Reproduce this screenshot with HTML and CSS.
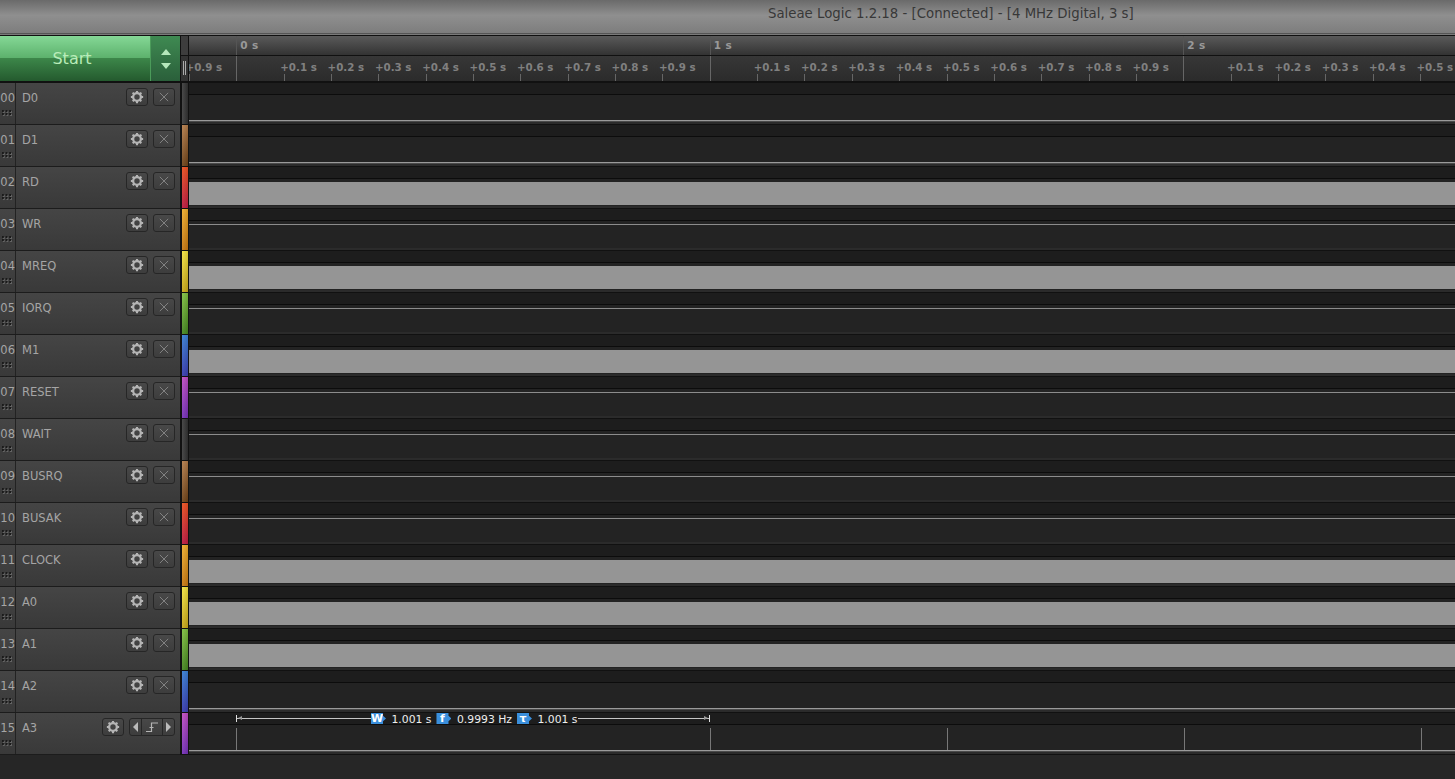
FILE: index.html
```html
<!DOCTYPE html>
<html lang="en">
<head>
  <meta charset="UTF-8">
  <title>Saleae Logic 1.2.18</title>
  <link rel="stylesheet" href="styles.css">
</head>
<body>
  <svg class="defs" width="0" height="0">
    <symbol id="gear" viewBox="0 0 16 16">
      <circle cx="8" cy="8" r="4.4" fill="none" stroke="currentColor" stroke-width="2.6"/>
      <path d="M8 1v14M1 8h14M3 3l10 10M13 3L3 13" stroke="currentColor" stroke-width="2.4" stroke-dasharray="2.6 8.8 2.6" fill="none"/>
    </symbol>
    <symbol id="cross" viewBox="0 0 12 12">
      <path d="M1 1l10 10M11 1L1 11" stroke="currentColor" stroke-width="1" fill="none"/>
    </symbol>
  </svg>

  <header class="titlebar">Saleae Logic 1.2.18 - [Connected] - [4 MHz Digital, 3 s]</header>

  <div class="toolbar">
    <div class="start-group">
      <div class="start-btn">Start</div>
      <div class="start-arrows"><span class="arrow-up"></span><span class="arrow-down"></span></div>
    </div>
    <div class="ruler-gutter"><span class="grip-bars"></span></div>
    <div class="ruler">
      <div class="ruler-major">
        <div class="major-cell first"></div>
        <div class="major-cell">0 s</div>
        <div class="major-cell">1 s</div>
        <div class="major-cell">2 s</div>
      </div>
      <div class="ruler-minor">
        <div class="tick"><span>+0.9 s</span></div>
        <div class="tick major"></div>
        <div class="tick"><span>+0.1 s</span></div>
        <div class="tick"><span>+0.2 s</span></div>
        <div class="tick"><span>+0.3 s</span></div>
        <div class="tick"><span>+0.4 s</span></div>
        <div class="tick"><span>+0.5 s</span></div>
        <div class="tick"><span>+0.6 s</span></div>
        <div class="tick"><span>+0.7 s</span></div>
        <div class="tick"><span>+0.8 s</span></div>
        <div class="tick"><span>+0.9 s</span></div>
        <div class="tick major"></div>
        <div class="tick"><span>+0.1 s</span></div>
        <div class="tick"><span>+0.2 s</span></div>
        <div class="tick"><span>+0.3 s</span></div>
        <div class="tick"><span>+0.4 s</span></div>
        <div class="tick"><span>+0.5 s</span></div>
        <div class="tick"><span>+0.6 s</span></div>
        <div class="tick"><span>+0.7 s</span></div>
        <div class="tick"><span>+0.8 s</span></div>
        <div class="tick"><span>+0.9 s</span></div>
        <div class="tick major"></div>
        <div class="tick"><span>+0.1 s</span></div>
        <div class="tick"><span>+0.2 s</span></div>
        <div class="tick"><span>+0.3 s</span></div>
        <div class="tick"><span>+0.4 s</span></div>
        <div class="tick"><span>+0.5 s</span></div>
      </div>
    </div>
  </div>

  <main class="channels">
    <div class="row">
      <div class="row-head"><div class="num">00<i class="dots"></i></div><div class="name">D0</div><div class="btns"><span class="btn"><svg class="ico-gear"><use href="#gear"/></svg></span><span class="btn"><svg class="ico-x"><use href="#cross"/></svg></span></div></div>
      <div class="strip c-black"></div>
      <div class="track"><div class="track-top"></div><div class="track-main"><div class="sig low"></div></div></div>
    </div>
    <div class="row">
      <div class="row-head"><div class="num">01<i class="dots"></i></div><div class="name">D1</div><div class="btns"><span class="btn"><svg class="ico-gear"><use href="#gear"/></svg></span><span class="btn"><svg class="ico-x"><use href="#cross"/></svg></span></div></div>
      <div class="strip c-brown"></div>
      <div class="track"><div class="track-top"></div><div class="track-main"><div class="sig low"></div></div></div>
    </div>
    <div class="row">
      <div class="row-head"><div class="num">02<i class="dots"></i></div><div class="name">RD</div><div class="btns"><span class="btn"><svg class="ico-gear"><use href="#gear"/></svg></span><span class="btn"><svg class="ico-x"><use href="#cross"/></svg></span></div></div>
      <div class="strip c-red"></div>
      <div class="track"><div class="track-top"></div><div class="track-main"><div class="sig band"></div></div></div>
    </div>
    <div class="row">
      <div class="row-head"><div class="num">03<i class="dots"></i></div><div class="name">WR</div><div class="btns"><span class="btn"><svg class="ico-gear"><use href="#gear"/></svg></span><span class="btn"><svg class="ico-x"><use href="#cross"/></svg></span></div></div>
      <div class="strip c-orange"></div>
      <div class="track"><div class="track-top"></div><div class="track-main"><div class="sig high"></div></div></div>
    </div>
    <div class="row">
      <div class="row-head"><div class="num">04<i class="dots"></i></div><div class="name">MREQ</div><div class="btns"><span class="btn"><svg class="ico-gear"><use href="#gear"/></svg></span><span class="btn"><svg class="ico-x"><use href="#cross"/></svg></span></div></div>
      <div class="strip c-yellow"></div>
      <div class="track"><div class="track-top"></div><div class="track-main"><div class="sig band"></div></div></div>
    </div>
    <div class="row">
      <div class="row-head"><div class="num">05<i class="dots"></i></div><div class="name">IORQ</div><div class="btns"><span class="btn"><svg class="ico-gear"><use href="#gear"/></svg></span><span class="btn"><svg class="ico-x"><use href="#cross"/></svg></span></div></div>
      <div class="strip c-green"></div>
      <div class="track"><div class="track-top"></div><div class="track-main"><div class="sig high"></div></div></div>
    </div>
    <div class="row">
      <div class="row-head"><div class="num">06<i class="dots"></i></div><div class="name">M1</div><div class="btns"><span class="btn"><svg class="ico-gear"><use href="#gear"/></svg></span><span class="btn"><svg class="ico-x"><use href="#cross"/></svg></span></div></div>
      <div class="strip c-blue"></div>
      <div class="track"><div class="track-top"></div><div class="track-main"><div class="sig band"></div></div></div>
    </div>
    <div class="row">
      <div class="row-head"><div class="num">07<i class="dots"></i></div><div class="name">RESET</div><div class="btns"><span class="btn"><svg class="ico-gear"><use href="#gear"/></svg></span><span class="btn"><svg class="ico-x"><use href="#cross"/></svg></span></div></div>
      <div class="strip c-purple"></div>
      <div class="track"><div class="track-top"></div><div class="track-main"><div class="sig high"></div></div></div>
    </div>
    <div class="row">
      <div class="row-head"><div class="num">08<i class="dots"></i></div><div class="name">WAIT</div><div class="btns"><span class="btn"><svg class="ico-gear"><use href="#gear"/></svg></span><span class="btn"><svg class="ico-x"><use href="#cross"/></svg></span></div></div>
      <div class="strip c-black"></div>
      <div class="track"><div class="track-top"></div><div class="track-main"><div class="sig high"></div></div></div>
    </div>
    <div class="row">
      <div class="row-head"><div class="num">09<i class="dots"></i></div><div class="name">BUSRQ</div><div class="btns"><span class="btn"><svg class="ico-gear"><use href="#gear"/></svg></span><span class="btn"><svg class="ico-x"><use href="#cross"/></svg></span></div></div>
      <div class="strip c-brown"></div>
      <div class="track"><div class="track-top"></div><div class="track-main"><div class="sig high"></div></div></div>
    </div>
    <div class="row">
      <div class="row-head"><div class="num">10<i class="dots"></i></div><div class="name">BUSAK</div><div class="btns"><span class="btn"><svg class="ico-gear"><use href="#gear"/></svg></span><span class="btn"><svg class="ico-x"><use href="#cross"/></svg></span></div></div>
      <div class="strip c-red"></div>
      <div class="track"><div class="track-top"></div><div class="track-main"><div class="sig high"></div></div></div>
    </div>
    <div class="row">
      <div class="row-head"><div class="num">11<i class="dots"></i></div><div class="name">CLOCK</div><div class="btns"><span class="btn"><svg class="ico-gear"><use href="#gear"/></svg></span><span class="btn"><svg class="ico-x"><use href="#cross"/></svg></span></div></div>
      <div class="strip c-orange"></div>
      <div class="track"><div class="track-top"></div><div class="track-main"><div class="sig band"></div></div></div>
    </div>
    <div class="row">
      <div class="row-head"><div class="num">12<i class="dots"></i></div><div class="name">A0</div><div class="btns"><span class="btn"><svg class="ico-gear"><use href="#gear"/></svg></span><span class="btn"><svg class="ico-x"><use href="#cross"/></svg></span></div></div>
      <div class="strip c-yellow"></div>
      <div class="track"><div class="track-top"></div><div class="track-main"><div class="sig band"></div></div></div>
    </div>
    <div class="row">
      <div class="row-head"><div class="num">13<i class="dots"></i></div><div class="name">A1</div><div class="btns"><span class="btn"><svg class="ico-gear"><use href="#gear"/></svg></span><span class="btn"><svg class="ico-x"><use href="#cross"/></svg></span></div></div>
      <div class="strip c-green"></div>
      <div class="track"><div class="track-top"></div><div class="track-main"><div class="sig band"></div></div></div>
    </div>
    <div class="row">
      <div class="row-head"><div class="num">14<i class="dots"></i></div><div class="name">A2</div><div class="btns"><span class="btn"><svg class="ico-gear"><use href="#gear"/></svg></span><span class="btn"><svg class="ico-x"><use href="#cross"/></svg></span></div></div>
      <div class="strip c-blue"></div>
      <div class="track"><div class="track-top"></div><div class="track-main"><div class="sig low"></div></div></div>
    </div>
    <div class="row">
      <div class="row-head"><div class="num">15<i class="dots"></i></div><div class="name">A3</div>
        <div class="btns">
          <span class="btn"><svg class="ico-gear"><use href="#gear"/></svg></span>
          <span class="btn-group">
            <span class="seg seg-side"><i class="tri-left"></i></span>
            <span class="seg seg-mid"><svg class="ico-edge" viewBox="0 0 12 12"><path d="M0 10.5h5.5V2H12M3.500 6.500h4" stroke="currentColor" stroke-width="1.200" fill="none"/></svg></span>
            <span class="seg seg-side"><i class="tri-right"></i></span>
          </span>
        </div>
      </div>
      <div class="strip c-purple"></div>
      <div class="track">
        <div class="track-top">
          <div class="measure">
            <span class="m-line m-start"></span>
            <b class="badge">W</b><span class="m-val">1.001 s</span>
            <b class="badge">f</b><span class="m-val">0.9993 Hz</span>
            <b class="badge">τ</b><span class="m-val">1.001 s</span>
            <span class="m-line m-end"></span>
          </div>
        </div>
        <div class="track-main markers"><div class="sig low"></div></div>
      </div>
    </div>
  </main>
</body>
</html>
```

FILE: styles.css
```css
html, body {
  margin: 0;
  padding: 0;
  height: 100%;
  overflow: hidden;
  background-color: #262626;
  font-family: "DejaVu Sans", sans-serif;
}

.defs {
  display: block;
  height: 0;
}

.titlebar {
  height: 35px;
  box-sizing: border-box;
  padding: 6px 0 0 768px;
  font-size: 13.3px;
  line-height: 16px;
  color: #383838;
  white-space: nowrap;
  background: linear-gradient(#6a6a6a, #8f8f8f 45%, #7c7c7c);
  border-bottom: 1px solid #7a7a7a;
  box-shadow: inset 0 -1px #555;
}

/* toolbar: start button + time ruler */
.toolbar {
  display: flex;
  height: 48px;
  box-sizing: border-box;
  border-top: 1px solid #111;
  border-bottom: 2px solid #111;
  background: #111;
}

.start-group {
  display: flex;
  width: 180px;
  flex: none;
}

.start-btn {
  width: 150px;
  box-sizing: border-box;
  padding-right: 6px;
  text-align: center;
  font-size: 16px;
  line-height: 45px;
  color: #b9ecb9;
  background: linear-gradient(#85d896, #5db26d 48%, #3c8649 50%, #245a2e);
}

.start-arrows {
  width: 29px;
  border-left: 1px solid #4b9b5a;
  display: flex;
  flex-direction: column;
  align-items: center;
  justify-content: center;
  gap: 8px;
  background: linear-gradient(#3f8a52, #2a5f3a);
}

.arrow-up, .arrow-down {
  width: 0;
  height: 0;
  border-left: 5px solid transparent;
  border-right: 5px solid transparent;
}

.arrow-up { border-bottom: 6px solid #b5e8bb; }
.arrow-down { border-top: 6px solid #b5e8bb; }

.ruler-gutter {
  width: 7px;
  margin: 0 1px;
  flex: none;
  background: linear-gradient(#3d3d3d 0, #3d3d3d 19px, #111 19px, #111 20px, #333 20px);
  position: relative;
}

.grip-bars {
  position: absolute;
  left: 2px;
  top: 25px;
  width: 1px;
  height: 14px;
  border-left: 1px solid #aaa;
  border-right: 1px solid #aaa;
}

.ruler {
  flex: 1;
  min-width: 0;
  overflow: hidden;
}

.ruler-major {
  display: flex;
  height: 19px;
  background: linear-gradient(#5a5a5a, #333);
  border-bottom: 1px solid #111;
}

.major-cell {
  width: 473.5px;
  flex: none;
  box-sizing: border-box;
  padding: 3px 0 0 3px;
  font-size: 10.5px;
  font-weight: bold;
  letter-spacing: 0.4px;
  line-height: 13px;
  color: #999;
  border-left: 1px solid #555;
}

.major-cell.first {
  width: 47.3px;
  border-left: 0;
}

.ruler-minor {
  display: flex;
  height: 25px;
  background: linear-gradient(#373737, #2b2b2b);
}

.tick {
  width: 47.35px;
  height: 25px;
  flex: none;
  position: relative;
}

.tick::before {
  content: "";
  position: absolute;
  left: 0;
  bottom: 0;
  width: 1px;
  height: 7px;
  background: #666;
}

.tick.major::before {
  height: 25px;
}

.tick span {
  display: block;
  margin-left: -3.5px;
  padding-top: 5px;
  font-size: 10.3px;
  font-weight: bold;
  line-height: 13px;
  color: #808080;
  white-space: nowrap;
}

/* channel rows */
.channels {
  display: flex;
  flex-direction: column;
}

.row {
  display: flex;
  height: 42px;
  background: #111;
}

.row-head {
  width: 180px;
  flex: none;
  height: 41px;
  display: flex;
  background: linear-gradient(#454545, #393939);
  border-bottom: 1px solid #1c1c1c;
}

.num {
  width: 15px;
  flex: none;
  height: 41px;
  overflow: hidden;
  position: relative;
  text-align: right;
  direction: rtl;
  font-size: 11.5px;
  line-height: 30px;
  color: #a5a5a5;
  border-right: 1px solid #222;
}

.dots {
  position: absolute;
  left: 2px;
  top: 27px;
  width: 11px;
  height: 6px;
  background-image:
    radial-gradient(circle at 1px 1px, #1a1a1a 1px, transparent 1.2px),
    radial-gradient(circle at 2px 2px, #666 0.9px, transparent 1.1px);
  background-size: 3.6px 3px;
}

.name {
  flex: 1;
  padding-left: 6px;
  font-size: 11.5px;
  line-height: 30px;
  color: #a5a5a5;
}

.btns {
  display: flex;
  gap: 5px;
  padding: 5px 5px 0 0;
}

.btn, .btn-group {
  height: 16px;
  border: 1px solid #262626;
  border-radius: 3px;
  background: linear-gradient(#484848, #3d3d3d);
  display: flex;
  align-items: center;
  justify-content: center;
  color: #b5b5b5;
}

.btn {
  width: 20px;
}

.ico-gear {
  width: 14px;
  height: 14px;
}

.ico-x {
  width: 10px;
  height: 10px;
  color: #8f8f8f;
}

.btn-group {
  width: 44px;
  justify-content: flex-start;
}

.seg {
  height: 16px;
  display: flex;
  align-items: center;
  justify-content: center;
}

.seg-side { width: 11px; }

.seg-mid {
  width: 20px;
  border-left: 1px solid #262626;
  border-right: 1px solid #262626;
}

.ico-edge {
  width: 12px;
  height: 12px;
}

.tri-left, .tri-right {
  width: 0;
  height: 0;
  border-top: 5px solid transparent;
  border-bottom: 5px solid transparent;
}

.tri-left { border-right: 5px solid #bbb; }
.tri-right { border-left: 5px solid #bbb; }

.strip {
  width: 6px;
  height: 41px;
  margin-left: 2px;
  flex: none;
}

.c-black { background: linear-gradient(90deg, #4a4a4a, #2c2c2c); }
.c-brown { background: linear-gradient(90deg, rgba(255,255,255,.08), rgba(0,0,0,.12)), linear-gradient(#b57d4a, #6e4218); }
.c-red { background: linear-gradient(90deg, rgba(255,255,255,.06), rgba(0,0,0,.1)), linear-gradient(#ec5222, #bd1c42); }
.c-orange { background: linear-gradient(90deg, rgba(255,255,255,.08), rgba(0,0,0,.12)), linear-gradient(#f0ae2c, #c87810); }
.c-yellow { background: linear-gradient(90deg, rgba(255,255,255,.08), rgba(0,0,0,.12)), linear-gradient(#f4e440, #c8a818); }
.c-green { background: linear-gradient(90deg, rgba(255,255,255,.08), rgba(0,0,0,.12)), linear-gradient(#80c040, #44861f); }
.c-blue { background: linear-gradient(90deg, rgba(255,255,255,.06), rgba(0,0,0,.1)), linear-gradient(#3a80d4, #3a3cae); }
.c-purple { background: linear-gradient(90deg, rgba(255,255,255,.08), rgba(0,0,0,.12)), linear-gradient(#c04cc4, #7430b8); }

.track {
  flex: 1;
  min-width: 0;
  margin-left: 1px;
  height: 41px;
  display: flex;
  flex-direction: column;
  overflow: hidden;
}

.track-top {
  height: 11px;
  flex: none;
  background: #1d1d1d;
  border-bottom: 1px solid #0c0c0c;
}

.track-main {
  flex: 1;
  position: relative;
  display: flex;
  flex-direction: column;
  background: #232323;
  border-bottom: 2px solid #2b2b2b;
}

.sig {
  background: #959595;
}

.sig.high {
  height: 1px;
  margin-top: 3px;
  background: #8c8c8c;
}

.sig.low {
  height: 1px;
  margin-top: 25px;
  background: #9a9a9a;
  border-bottom: 1px solid #4a4a4a;
}

.sig.band {
  height: 23px;
  margin-top: 3px;
}

/* period / frequency measurement on the last channel */
.measure {
  display: flex;
  height: 11px;
  margin-left: 47px;
  width: 474px;
  font-size: 10.8px;
  color: #eee;
}

.m-line {
  height: 1px;
  margin-top: 5px;
  background: #c4c4c4;
  position: relative;
}

.m-start {
  width: 135px;
  flex: none;
}

.m-end {
  flex: 1;
  margin-left: -4px;
}

/* end caps and arrow heads of the span line */
.m-start::before, .m-end::before {
  content: "";
  position: absolute;
  top: -3px;
  width: 1px;
  height: 7px;
  background: #ddd;
}

.m-start::before { left: 0; }
.m-end::before { right: 0; }

.m-start::after, .m-end::after {
  content: "";
  position: absolute;
  top: -2px;
  border-top: 2.5px solid transparent;
  border-bottom: 2.5px solid transparent;
}

.m-start::after {
  left: 2px;
  border-right: 4px solid #999;
}

.m-end::after {
  right: 2px;
  border-left: 4px solid #999;
}

.badge {
  width: 15px;
  height: 11px;
  flex: none;
  box-sizing: border-box;
  padding-right: 3px;
  text-align: center;
  font-size: 11px;
  line-height: 11px;
  color: #fff;
  background: #3a8fdc;
  clip-path: polygon(0 0, 80% 0, 80% 25%, 100% 50%, 80% 75%, 80% 100%, 0 100%);
}

.m-val {
  padding: 1px 5px 0 5.5px;
  line-height: 12px;
  white-space: nowrap;
}

.markers {
  background-color: #232323;
  background-image:
    linear-gradient(#777, #777),
    linear-gradient(#777, #777),
    linear-gradient(#777, #777),
    linear-gradient(#777, #777),
    linear-gradient(#777, #777);
  background-repeat: no-repeat;
  background-size: 1px 22px;
  background-position: 47px 3px, 521px 3px, 758px 3px, 995px 3px, 1232px 3px;
}
```
